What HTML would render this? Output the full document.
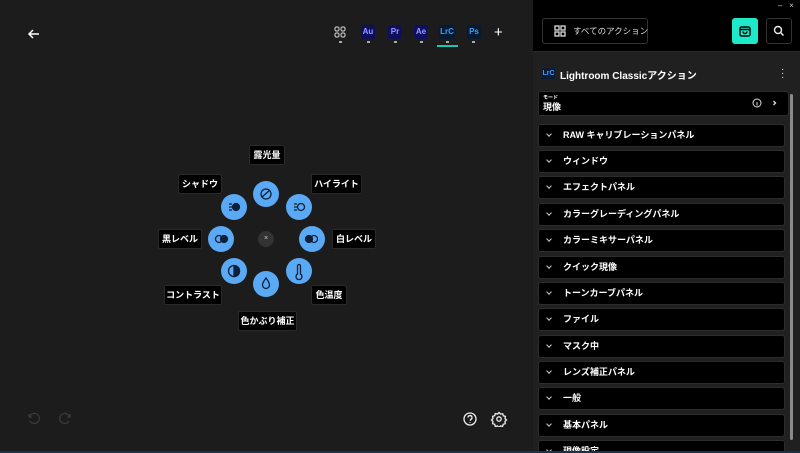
<!DOCTYPE html><html><head><meta charset="utf-8"><style>
*{margin:0;padding:0;box-sizing:border-box}
html,body{width:800px;height:453px;overflow:hidden}
body{background:#1c1c1c;font-family:"Liberation Sans","Noto Sans CJK JP",sans-serif;color:#fff;position:relative}
.a{position:absolute;white-space:nowrap}
.lbl{position:absolute;background:#000;border:1px solid #2a2a2a;font-size:9px;font-weight:bold;height:20px;line-height:18px;text-align:center;border-radius:2px;white-space:nowrap}
.btn{position:absolute;width:26px;height:26px;border-radius:50%;background:#5aa9f5;margin:-13px 0 0 -13px}
.app{position:absolute;top:25px;width:14px;height:14px;border-radius:3px;font-size:8px;font-weight:bold;text-align:center;line-height:14px}
.dot{position:absolute;top:41px;width:3px;height:2px;background:#aaa}
.row{position:absolute;left:538px;width:247px;height:23px;background:#000;border:1px solid #2c2c2c;border-radius:3px;font-size:9px;font-weight:bold;line-height:21px;padding-left:24px;white-space:nowrap}
.row:before{content:"";position:absolute;left:8px;top:7px;width:3px;height:3px;border-right:1.5px solid #ccc;border-bottom:1.5px solid #ccc;transform:rotate(45deg)}
#wrap{position:absolute;left:0;top:0;width:800px;height:453px;overflow:hidden}
</style></head><body><div id="wrap">
<svg class="a" style="left:27px;top:27px" width="14" height="14" viewBox="0 0 14 14"><path d="M12 7H2M6 3L2 7l4 4" stroke="#fff" stroke-width="1.5" fill="none"/></svg>
<svg class="a" style="left:334px;top:26px" width="12" height="12" viewBox="0 0 12 12" fill="none" stroke="#bbb" stroke-width="1.2"><rect x="1" y="1" width="4" height="4" rx="1.5"/><rect x="7" y="1" width="4" height="4" rx="1.5"/><rect x="1" y="7" width="4" height="4" rx="1.5"/><rect x="7" y="7" width="4" height="4" rx="1.5"/></svg>
<div class="dot" style="left:339px"></div>
<div class="app" style="left:361px;background:#0f0f60;color:#9a9aff">Au</div><div class="dot" style="left:367px"></div>
<div class="app" style="left:388px;background:#0f0f60;color:#9a9aff">Pr</div><div class="dot" style="left:394px"></div>
<div class="app" style="left:414px;background:#0f0f60;color:#9a9aff">Ae</div><div class="dot" style="left:420px"></div>
<div class="app" style="left:439px;width:16px;background:#071a33;color:#3fa0ff">LrC</div><div class="dot" style="left:446px"></div>
<div class="a" style="left:437px;top:45px;width:21px;height:2px;background:#18c6b4"></div>
<div class="app" style="left:467px;background:#071a33;color:#3fa0ff">Ps</div><div class="dot" style="left:472px"></div>
<div class="a" style="left:494px;top:24px;font-size:15px">+</div>
<div class="lbl" style="left:249px;top:145px;width:36px">露光量</div>
<div class="lbl" style="left:178px;top:174px;width:44px">シャドウ</div>
<div class="lbl" style="left:311px;top:174px;width:51px">ハイライト</div>
<div class="lbl" style="left:158px;top:229px;width:44px">黒レベル</div>
<div class="lbl" style="left:332px;top:229px;width:44px">白レベル</div>
<div class="lbl" style="left:164px;top:285px;width:58px">コントラスト</div>
<div class="lbl" style="left:311px;top:285px;width:36px">色温度</div>
<div class="lbl" style="left:238px;top:311px;width:59px">色かぶり補正</div>
<div class="btn" style="left:266px;top:194px"></div>
<div class="btn" style="left:234px;top:207px"></div>
<div class="btn" style="left:299px;top:207px"></div>
<div class="btn" style="left:221px;top:239px"></div>
<div class="btn" style="left:312px;top:239px"></div>
<div class="btn" style="left:234px;top:271px"></div>
<div class="btn" style="left:299px;top:271px"></div>
<div class="btn" style="left:266px;top:284px"></div>
<svg class="a" style="left:0;top:0" width="533" height="453" fill="none" stroke="#0d2038" stroke-width="1.3">
<circle cx="266" cy="194" r="5"/><path d="M262 197l8-7"/>
<circle cx="236" cy="207" r="3.5" fill="#0d2038"/><path d="M229 204h3M229 207h3M229 210h3"/>
<circle cx="301" cy="207" r="3.5"/><path d="M294 204h3M294 207h3M294 210h3"/>
<circle cx="219" cy="239" r="3.5"/><circle cx="224" cy="239" r="3.5" fill="#0d2038"/>
<circle cx="309" cy="239" r="3.5" fill="#0d2038"/><circle cx="314" cy="239" r="3.5"/>
<circle cx="234" cy="271" r="5.5"/><path d="M234 265.5a5.5 5.5 0 0 1 0 11z" fill="#0d2038"/>
<path d="M297.5 266v8a3 3 0 1 0 3 0v-8a1.5 1.5 0 0 0-3 0z"/>
<path d="M266 278c-3 4-3.5 6-3.5 7a3.5 3.5 0 0 0 7 0c0-1-.5-3-3.5-7z"/>
</svg>
<div class="a" style="left:258px;top:231px;width:16px;height:16px;border-radius:50%;background:#333;font-size:7px;text-align:center;line-height:16px;color:#ccc">×</div>
<svg class="a" style="left:26px;top:411px" width="50" height="14" fill="none" stroke="#3a3a3a" stroke-width="1.3"><path d="M3 3v3h3M3.5 6A5 5 0 1 1 4 10"/><path d="M44 3v3h-3M43.5 6A5 5 0 1 0 43 10"/></svg>
<svg class="a" style="left:462px;top:411px" width="48" height="16" fill="none" stroke="#eee" stroke-width="1.3"><circle cx="8" cy="8" r="6"/><path d="M6 6.5a2 2 0 1 1 2.5 2v1.2M8 11.3v.7"/><circle cx="37" cy="8" r="2.2"/><path d="M37 1.5l1.5 1.6 2.2-.4.6 2.1 2.1.6-.4 2.2L44.5 9l-1.6 1.5.4 2.2-2.1.6-.6 2.1-2.2-.4L37 16.5 35.5 15l-2.2.4-.6-2.1-2.1-.6.4-2.2L29.5 9l1.5-1.5-.4-2.2 2.1-.6.6-2.1 2.2.4z"/></svg>
<div class="a" style="left:533px;top:0;width:267px;height:453px;background:#202020"></div>
<div class="a" style="left:533px;top:0;width:267px;height:52px;background:#000;border-bottom:1px solid #2a2a2a"></div>
<div class="a" style="left:778px;top:1px;font-size:8px;color:#ccc">–&nbsp;&nbsp;&nbsp;×</div>
<div class="a" style="left:542px;top:18px;width:106px;height:26px;border:1px solid #333;border-radius:3px"></div>
<div class="a" style="left:573px;top:25px;font-size:8.5px;line-height:12px;color:#ddd">すべてのアクション</div>
<svg class="a" style="left:554px;top:25px" width="12" height="12" fill="none" stroke="#ddd" stroke-width="1.3"><rect x="1" y="1" width="4" height="4"/><rect x="7" y="1" width="4" height="4"/><rect x="1" y="7" width="4" height="4"/><rect x="7" y="7" width="4" height="4"/></svg>
<div class="a" style="left:732px;top:18px;width:26px;height:26px;background:#1de9c9;border-radius:3px"></div>
<svg class="a" style="left:738px;top:24px" width="14" height="14" fill="none" stroke="#000" stroke-width="1.4"><rect x="2" y="3" width="10" height="9" rx="1.5"/><path d="M2 5.5h10M5 7.5a2 2 0 0 0 4 0"/></svg>
<div class="a" style="left:766px;top:18px;width:26px;height:26px;border:1px solid #333;border-radius:3px"></div>
<svg class="a" style="left:773px;top:25px" width="12" height="12" fill="none" stroke="#eee" stroke-width="1.4"><circle cx="5" cy="5" r="3.5"/><path d="M7.5 7.5l3 3"/></svg>
<div class="a" style="left:542px;top:68px;width:13px;height:11px;background:#0b1b33;color:#3fa0ff;font-size:7px;font-weight:bold;text-align:center;line-height:11px">LrC</div>
<div class="a" style="left:560px;top:67px;font-size:10px;font-weight:bold">Lightroom Classicアクション</div>
<div class="a" style="left:781px;top:68px;font-size:10px;line-height:4px;color:#ddd">·<br>·<br>·</div>
<div class="a" style="left:538px;top:91px;width:251px;height:25px;background:#000;border:1px solid #2c2c2c;border-radius:3px"></div>
<div class="a" style="left:543px;top:94px;font-size:5px;font-weight:bold">モード</div>
<div class="a" style="left:543px;top:100px;font-size:9px;font-weight:bold">現像</div>
<svg class="a" style="left:752px;top:98px" width="30" height="10" fill="none" stroke="#ddd" stroke-width="1"><circle cx="5" cy="5" r="4"/><path d="M5 4v3.5"/><path d="M21.5 3l2 2-2 2" stroke-width="1.3"/></svg>
<div class="row" style="top:124px">RAW キャリブレーションパネル</div>
<div class="row" style="top:150px">ウィンドウ</div>
<div class="row" style="top:176px">エフェクトパネル</div>
<div class="row" style="top:203px">カラーグレーディングパネル</div>
<div class="row" style="top:229px">カラーミキサーパネル</div>
<div class="row" style="top:256px">クイック現像</div>
<div class="row" style="top:282px">トーンカーブパネル</div>
<div class="row" style="top:308px">ファイル</div>
<div class="row" style="top:335px">マスク中</div>
<div class="row" style="top:361px">レンズ補正パネル</div>
<div class="row" style="top:387px">一般</div>
<div class="row" style="top:414px">基本パネル</div>
<div class="row" style="top:440px">現像設定</div>
<div class="a" style="left:790px;top:94px;width:3px;height:346px;background:#8a8a8a;border-radius:2px"></div>
<div class="a" style="left:0;top:451px;width:800px;height:2px;background:#1a3050"></div>
</div></body></html>
